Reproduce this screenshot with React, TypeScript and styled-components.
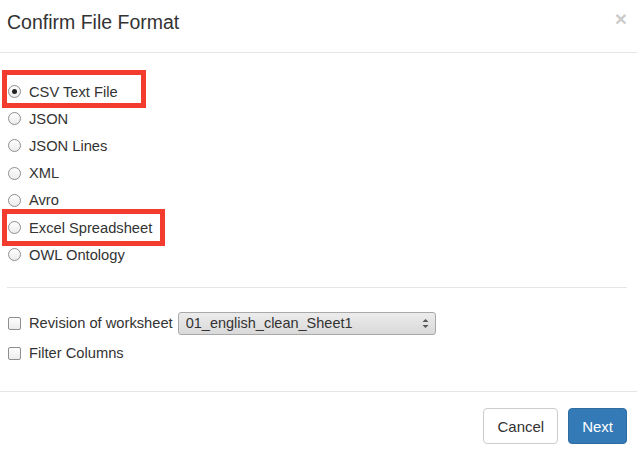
import React from "react";
import styled, { createGlobalStyle } from "styled-components";

const Global = createGlobalStyle`
  html, body { margin: 0; padding: 0; background: #fff; }
  body { font-family: "Liberation Sans", Arial, sans-serif; color: #333; font-size: 14.7px; }
  * { box-sizing: border-box; }
`;

const Modal = styled.div`
  position: relative;
  width: 637px;
  height: 454px;
  background: #fff;
  display: flex;
  flex-direction: column;
`;

const Header = styled.div`
  height: 53px;
  border-bottom: 1px solid #e5e5e5;
  padding: 9px 10px 0 7px;
  display: flex;
  justify-content: space-between;
  align-items: flex-start;
`;

const Title = styled.h4`
  margin: 0;
  font-family: "Liberation Sans", Arial, sans-serif;
  font-size: 19.5px;
  font-weight: 400;
  line-height: 26px;
  color: #333;
`;

const Close = styled.button`
  border: 0;
  background: transparent;
  padding: 0;
  margin-top: -1px;
  font-family: "Liberation Sans", Arial, sans-serif;
  font-size: 21px;
  font-weight: 700;
  line-height: 1;
  color: #000;
  opacity: 0.2;
  cursor: pointer;
`;

const Body = styled.div`
  flex: 1;
  padding: 25px 10px 0 7px;
  display: flex;
  flex-direction: column;
`;

const RadioList = styled.div`
  display: flex;
  flex-direction: column;
  padding-bottom: 19px;
  border-bottom: 1px solid #e5e5e5;
`;

const Row = styled.label<{ $h: number }>`
  display: flex;
  align-items: center;
  height: ${(p) => p.$h}px;
  font-size: 14.7px;
  line-height: 20px;
  color: #333;
`;

const RadioMark = styled.span<{ $checked?: boolean }>`
  width: 13px;
  height: 13px;
  margin: 0 8px 0 1px;
  border-radius: 50%;
  border: 1px solid #8e8e8e;
  background: linear-gradient(#fdfdfd, #ececec);
  display: flex;
  align-items: center;
  justify-content: center;
  flex-shrink: 0;
  &::after {
    content: "";
    display: ${(p) => (p.$checked ? "block" : "none")};
    width: 5px;
    height: 5px;
    border-radius: 50%;
    background: #222;
  }
`;

const CheckMark = styled.span`
  width: 13px;
  height: 13px;
  margin: 0 8px 0 1px;
  border-radius: 2px;
  border: 1px solid #8e8e8e;
  background: linear-gradient(#fdfdfd, #ececec);
  flex-shrink: 0;
`;

const Options = styled.div`
  display: flex;
  flex-direction: column;
  padding-top: 20px;
`;

const SelectWrap = styled.div`
  position: relative;
  margin-left: 5px;
  width: 258px;
  height: 23px;
`;

const Select = styled.select`
  appearance: none;
  -webkit-appearance: none;
  width: 100%;
  height: 100%;
  border: 1px solid #a9a9a9;
  border-radius: 3px;
  background: linear-gradient(#ececec, #d9d9d9);
  font-family: "Liberation Sans", Arial, sans-serif;
  font-size: 14.5px;
  color: #333;
  padding: 0 20px 0 7px;
  outline: none;
`;

const Arrows = styled.svg`
  position: absolute;
  right: 7px;
  top: 6px;
  pointer-events: none;
`;

const Footer = styled.div`
  height: 63px;
  border-top: 1px solid #e5e5e5;
  padding: 16px 10px 0 0;
  display: flex;
  justify-content: flex-end;
  align-items: flex-start;
  gap: 10px;
`;

const Button = styled.button<{ $primary?: boolean }>`
  height: 36px;
  padding: 0 13px;
  border-radius: 4px;
  border: 1px solid ${(p) => (p.$primary ? "#2e6da4" : "#ccc")};
  background: ${(p) => (p.$primary ? "#337ab7" : "#fff")};
  color: ${(p) => (p.$primary ? "#fff" : "#333")};
  font-family: "Liberation Sans", Arial, sans-serif;
  font-size: 15px;
  cursor: pointer;
`;

const Highlight = styled.div<{ $x: number; $y: number; $w: number; $h: number }>`
  position: absolute;
  left: ${(p) => p.$x}px;
  top: ${(p) => p.$y}px;
  width: ${(p) => p.$w}px;
  height: ${(p) => p.$h}px;
  border: 5px solid #f33b2e;
  pointer-events: none;
`;

const formats = ["CSV Text File", "JSON", "JSON Lines", "XML", "Avro", "Excel Spreadsheet", "OWL Ontology"];

export default function App() {
  return (
    <>
      <Global />
      <Modal>
        <Header>
          <Title>Confirm File Format</Title>
          <Close aria-label="Close">×</Close>
        </Header>
        <Body>
          <RadioList>
            {formats.map((f, i) => (
              <Row key={f} $h={27.2}>
                <RadioMark $checked={i === 0} />
                {f}
              </Row>
            ))}
          </RadioList>
          <Options>
            <Row $h={30}>
              <CheckMark />
              Revision of worksheet
              <SelectWrap>
                <Select defaultValue="01_english_clean_Sheet1">
                  <option>01_english_clean_Sheet1</option>
                </Select>
                <Arrows width="7" height="11" viewBox="0 0 7 11">
                  <path d="M0.5 4 L3.5 1 L6.5 4 Z" fill="#555" />
                  <path d="M0.5 7 L3.5 10 L6.5 7 Z" fill="#555" />
                </Arrows>
              </SelectWrap>
            </Row>
            <Row $h={30}>
              <CheckMark />
              Filter Columns
            </Row>
          </Options>
        </Body>
        <Footer>
          <Button>Cancel</Button>
          <Button $primary>Next</Button>
        </Footer>
        <Highlight $x={2} $y={70} $w={144} $h={38} />
        <Highlight $x={2} $y={209} $w={163} $h={37} />
      </Modal>
    </>
  );
}
